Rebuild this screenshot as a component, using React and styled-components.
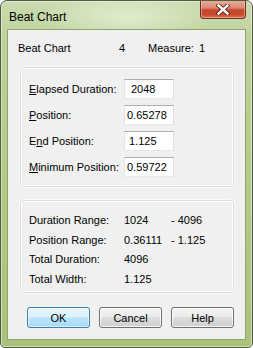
import React from 'react'
import styled, { createGlobalStyle } from 'styled-components';

const GlobalStyle = createGlobalStyle`
  * {
    margin: 0;
    padding: 0;
    box-sizing: border-box;
  }
  body {
    background: #ffffff;
    font-family: "Liberation Sans", Arial, sans-serif;
    font-size: 11px;
    color: #000000;
  }
`;

const fields = [
  { label: 'Elapsed Duration:', key: 'E', at: 0, value: '2048', pad: 6 },
  { label: 'Position:', key: 'P', at: 0, value: '0.65278', pad: 2 },
  { label: 'End Position:', key: 'n', at: 1, value: '1.125', pad: 4 },
  { label: 'Minimum Position:', key: 'M', at: 0, value: '0.59722', pad: 2 },
];

const stats = [
  { label: 'Duration Range:', from: '1024', to: '- 4096' },
  { label: 'Position Range:', from: '0.36111', to: '- 1.125' },
  { label: 'Total Duration:', from: '4096' },
  { label: 'Total Width:', from: '1.125' },
];

const Mnemonic = ({ text, at }) => (
  <>
    {text.slice(0, at)}
    <u>{text[at]}</u>
    {text.slice(at + 1)}
  </>
);

const CloseGlyph = () => (
  <svg width="14" height="11" viewBox="0 0 14 11">
    <path d="M2.5 1.5 L11.5 9.5 M11.5 1.5 L2.5 9.5" stroke="#5a2418" strokeWidth="4.2" strokeLinecap="square" />
    <path d="M2.5 1.5 L11.5 9.5 M11.5 1.5 L2.5 9.5" stroke="#ffffff" strokeWidth="2.4" strokeLinecap="square" />
  </svg>
);

export default function App() {
  return (
    <>
      <GlobalStyle />
      <Window>
        <TitleBar>
          <Title>Beat Chart</Title>
          <CloseButton><CloseGlyph /></CloseButton>
        </TitleBar>
        <Client>
          <Header>
            <span>Beat Chart</span>
            <span>4</span>
            <span>Measure:</span>
            <span>1</span>
          </Header>

          <GroupBox $top={12} $bottom={10} $height={120}>
            {fields.map((f) => (
              <FieldRow key={f.label}>
                <Label><Mnemonic text={f.label} at={f.label.indexOf(f.key, f.at)} /></Label>
                <Field $pad={f.pad}>{f.value}</Field>
              </FieldRow>
            ))}
          </GroupBox>

          <GroupBox $top={11} $bottom={0} $height={93} $gap={0}>
            {stats.map((s) => (
              <StatRow key={s.label}>
                <span>{s.label}</span>
                <span>{s.from}</span>
                <span>{s.to}</span>
              </StatRow>
            ))}
          </GroupBox>

          <ButtonBar>
            <Button $primary>OK</Button>
            <Button>Cancel</Button>
            <Button>Help</Button>
          </ButtonBar>
        </Client>
      </Window>
    </>
  );
}

const Window = styled.div`
  width: 253px;
  height: 348px;
  display: flex;
  flex-direction: column;
  border: 1px solid #4f5d3f;
  border-radius: 7px 7px 5px 5px;
  padding: 0 6px 7px 6px;
  background:
    radial-gradient(ellipse 90px 26px at 125px 16px, rgba(228, 238, 210, 0.9), rgba(228, 238, 210, 0) 100%),
    linear-gradient(180deg, #cadbb0 0px, #bdd29a 40px, #b1c985 200px, #aac27b 100%);
  box-shadow: inset 0 0 0 1px rgba(255, 255, 255, 0.45);
  overflow: hidden;
`;

const TitleBar = styled.div`
  height: 28px;
  display: flex;
  align-items: flex-start;
  justify-content: space-between;
`;

const Title = styled.div`
  padding: 9px 0 0 2px;
  font-size: 12px;
  color: #000000;
`;

const CloseButton = styled.div`
  width: 46px;
  height: 19px;
  margin-top: -1px;
  margin-right: 0px;
  display: flex;
  align-items: center;
  justify-content: center;
  border: 1px solid #6e2c1e;
  border-top: none;
  border-radius: 0 0 4px 4px;
  background: linear-gradient(180deg, #e9b0a0 0%, #dc8670 45%, #c4462d 55%, #c9492e 80%, #db7450 100%);
  box-shadow: inset 0 0 0 1px rgba(255, 220, 200, 0.45);
`;

const Client = styled.div`
  flex: 1;
  display: flex;
  flex-direction: column;
  background: #f0f0f0;
  border: 1px solid #8fa46e;
  padding: 0 11px 0 12px;
`;

const Header = styled.div`
  display: grid;
  grid-template-columns: 101px 29px 51px auto;
  margin: 11px 0 0 -2px;
  line-height: 14px;
  height: 14px;
`;

const GroupBox = styled.div`
  margin-top: ${(p) => (p.$top === 12 ? 12 : 13)}px;
  height: ${(p) => p.$height}px;
  border: 1px solid #d5dfe5;
  border-radius: 3px;
  box-shadow: inset 0 0 0 1px #ffffff, 0 0 0 1px rgba(255, 255, 255, 0.6);
  padding: ${(p) => p.$top - 1}px 8px 0 8px;
  display: flex;
  flex-direction: column;
  gap: ${(p) => (p.$gap === 0 ? 0 : 6)}px;
`;

const FieldRow = styled.div`
  display: flex;
  align-items: center;
  height: 20px;
`;

const Label = styled.div`
  width: 95px;
  u {
    text-decoration: underline;
    text-underline-offset: 1px;
  }
`;

const Field = styled.div`
  width: 50px;
  height: 20px;
  background: #ffffff;
  border: 1px solid;
  border-color: #abadb3 #dbdfe6 #e3e9ef #e2e3ea;
  padding-left: ${(p) => p.$pad}px;
  line-height: 18px;
`;

const StatRow = styled.div`
  display: grid;
  grid-template-columns: 95px 47px auto;
  height: 19.5px;
  line-height: 19.5px;
`;

const ButtonBar = styled.div`
  display: flex;
  gap: 9px;
  margin: 14px 0 0 7px;
`;

const Button = styled.div`
  width: 63px;
  height: 21px;
  display: flex;
  align-items: center;
  justify-content: center;
  border-radius: 3px;
  border: 1px solid ${(p) => (p.$primary ? '#3c7fb1' : '#707070')};
  background: ${(p) =>
    p.$primary
      ? 'linear-gradient(180deg, #eaf6fd 0%, #d9f0fc 50%, #bee6fd 50%, #a7d9f5 100%)'
      : 'linear-gradient(180deg, #f2f2f2 0%, #ebebeb 50%, #dddddd 50%, #cfcfcf 100%)'};
  box-shadow: inset 0 0 0 1px ${(p) => (p.$primary ? 'rgba(255,255,255,0.55)' : 'rgba(255,255,255,0.8)')};
`;
